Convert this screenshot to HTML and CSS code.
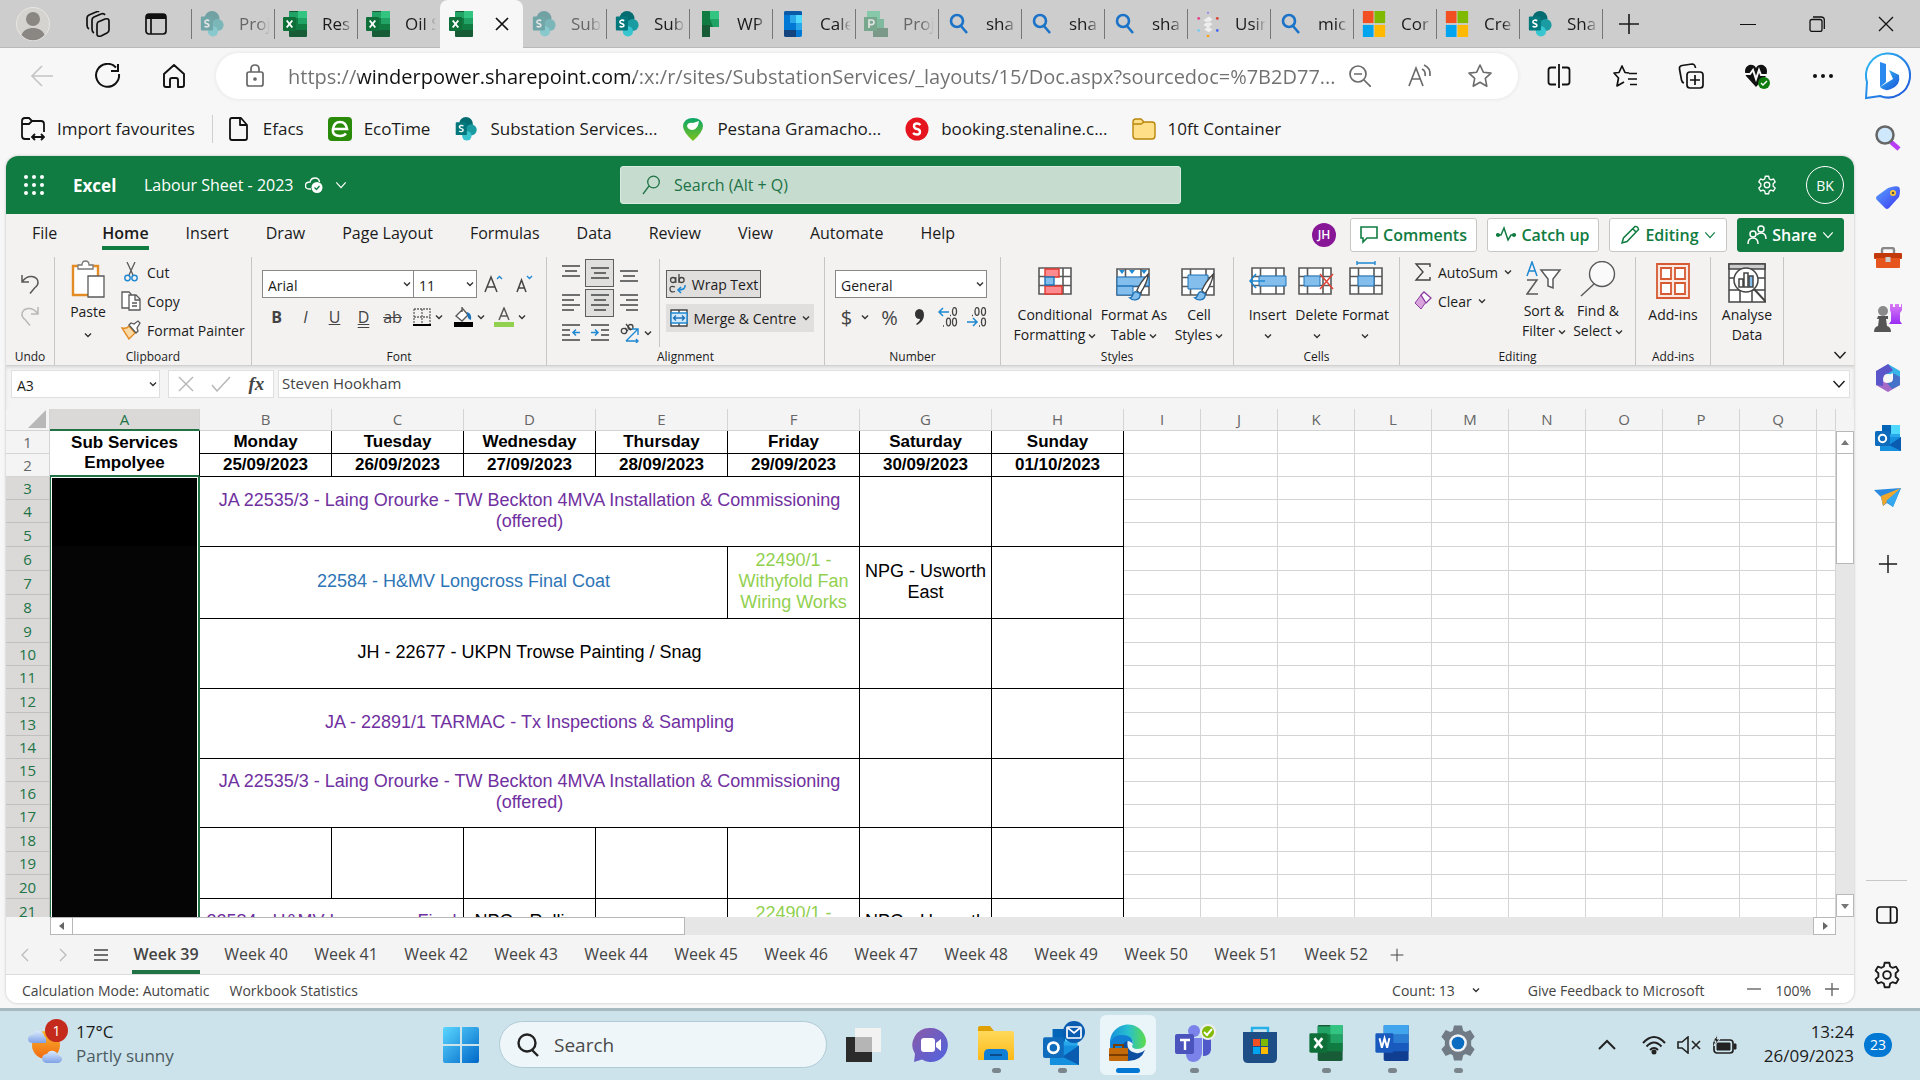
FILE: index.html
```html
<!DOCTYPE html>
<html lang="en-GB">
<head>
<meta charset="utf-8">
<title>Labour Sheet - 2023</title>
<link rel="stylesheet" href="styles.css">
</head>
<body>
<svg class="sprite" aria-hidden="true">
  <defs>
    <linearGradient id="gWin" x1="0" y1="0" x2="1" y2="1"><stop offset="0" stop-color="#5ad6ff"/><stop offset="1" stop-color="#0067c8"/></linearGradient>
    <linearGradient id="gBing" x1="0" y1="0" x2="1" y2="1"><stop offset="0" stop-color="#2fc0f5"/><stop offset="1" stop-color="#1e50d8"/></linearGradient>
    <linearGradient id="gTag" x1="0" y1="0" x2="1" y2="1"><stop offset="0" stop-color="#5aa5ff"/><stop offset="1" stop-color="#3b35f0"/></linearGradient>
    <linearGradient id="gPin" x1="0" y1="0" x2="0" y2="1"><stop offset="0" stop-color="#0aa66a"/><stop offset="1" stop-color="#7cc21c"/></linearGradient>
    <linearGradient id="gSun" x1="0" y1="0" x2="0" y2="1"><stop offset="0" stop-color="#fbb42b"/><stop offset="1" stop-color="#f06a12"/></linearGradient>
    <linearGradient id="gCloud" x1="0" y1="0" x2="0" y2="1"><stop offset="0" stop-color="#dce9fd"/><stop offset="1" stop-color="#7ea2e6"/></linearGradient>
    <linearGradient id="gChat" x1="0" y1="0" x2="1" y2="1"><stop offset="0" stop-color="#8a5aa8"/><stop offset="1" stop-color="#4f63e0"/></linearGradient>
    <linearGradient id="gFolder" x1="0" y1="0" x2="0" y2="1"><stop offset="0" stop-color="#ffd95c"/><stop offset="1" stop-color="#fbb917"/></linearGradient>
    <linearGradient id="gEdge" x1="0" y1="0" x2="1" y2="0"><stop offset="0" stop-color="#1591dc"/><stop offset=".5" stop-color="#27bfd0"/><stop offset="1" stop-color="#5ddc4a"/></linearGradient>
    <linearGradient id="gRook" x1="0" y1="0" x2="0" y2="1"><stop offset="0" stop-color="#d97cf5"/><stop offset="1" stop-color="#9a2cf5"/></linearGradient>
  </defs>
  <symbol id="sp" viewBox="0 0 24 28"><circle cx="12" cy="8" r="8" fill="#036c70"/><circle cx="18" cy="15" r="6.500" fill="#1a9ba1"/><circle cx="13" cy="22" r="5.500" fill="#37c6d0"/><rect y="6" width="13" height="15" rx="1" fill="#03787c"/><path d="M9 10.500C7 9.200 4.300 10 4.300 11.800 4.300 14.200 8.700 13 8.700 15.300 8.700 17.400 5.600 17.500 4 16.300" fill="none" stroke="#fff" stroke-width="1.700"/></symbol>
  <symbol id="xl" viewBox="0 0 24 26"><rect x="6" width="18" height="26" rx="1" fill="#185c37"/><path d="M6 1h9v6H6z" fill="#21a366"/><path d="M15 0h9v7h-9z" fill="#33c481"/><path d="M15 7h9v6h-9z" fill="#21a366"/><path d="M6 7h9v12H6zM15 13h9v6h-9z" fill="#107c41"/><rect y="6" width="13" height="14" rx="1" fill="#0e7038"/><path d="m3.700 9.500 5.600 7M9.300 9.500l-5.600 7" stroke="#fff" stroke-width="1.900"/></symbol>
  <symbol id="mag" viewBox="0 0 24 24"><circle cx="10" cy="9" r="6" fill="none" stroke="#1a73c8" stroke-width="2.600"/><path d="m14 14 6 7" stroke="#1a73c8" stroke-width="2.600"/></symbol>
  <symbol id="ms" viewBox="0 0 24 28"><path d="M0 0h11.500v13H0z" fill="#f25022"/><path d="M12.500 0H24v13H12.500z" fill="#7fba00"/><path d="M0 15h11.500v13H0z" fill="#00a4ef"/><path d="M12.500 15H24v13H12.500z" fill="#ffb900"/></symbol>
  <symbol id="chev" viewBox="0 0 8 8"><path d="m1 2.500 3 3 3-3" fill="none" stroke="currentColor" stroke-width="1.400"/></symbol>
  <symbol id="chevL" viewBox="0 0 14 14"><path d="m1.500 4 5.500 6 5.500-6" fill="none" stroke="currentColor" stroke-width="1.400"/></symbol>
  <symbol id="plus" viewBox="0 0 22 22"><path d="M11 1v20M1 11h20" stroke="currentColor" stroke-width="1.600"/></symbol>
  <symbol id="cog" viewBox="0 0 24 24"><path d="M10 1.500h4l.7 3.200 2 1.100 3.100-1 2 3.500-2.400 2.200v3l2.400 2.200-2 3.500-3.100-1-2 1.100-.7 3.200h-4l-.7-3.200-2-1.100-3.100 1-2-3.500 2.400-2.200v-3L2.200 8.300l2-3.500 3.100 1 2-1.100z" fill="none" stroke="currentColor" stroke-width="1.600" stroke-linejoin="round"/><circle cx="12" cy="12" r="3.300" fill="none" stroke="currentColor" stroke-width="1.600"/></symbol>
  <symbol id="brush" viewBox="0 0 20 28"><path d="M19 1C14 6 10 12 8 17l3 3C15 14 18 8 19 1z" fill="#fff" stroke="#444" stroke-width="1.300"/><path d="M7 18c-4 0-2 6-6 6 3 3 11 3 10-4z" fill="#83beec" stroke="#1e73b8" stroke-width="1.300"/></symbol>
  <symbol id="grid" viewBox="0 0 34 28"><path d="M1 1h32v26H1z" fill="#fff"/><path d="M1 1h32v26H1zM1 9.500h32M1 18.500h32M9.500 1v26M25 1v26" fill="none" stroke="#595959" stroke-width="1.600"/></symbol>
  <symbol id="outlook" viewBox="0 0 26 26"><path d="M7 0h18v18H7z" fill="#28a8ea"/><path d="M7 0h9v9H7z" fill="#0364b8"/><path d="M16 0h9v9h-9z" fill="#50d9ff"/><path d="m5 12 21 0v14H5z" fill="#1490df"/><path d="m26 12-12 8 12 6z" fill="#0a5cb0"/><rect y="6" width="15" height="15" rx="1.500" fill="#0f6cbd"/><circle cx="7.500" cy="13.500" r="3.700" fill="none" stroke="#fff" stroke-width="2"/></symbol>
</svg>

<header class="tabstrip">
  <div class="strip-tools">
    <button class="plain" aria-label="Profile"><svg width="34" height="34" viewBox="0 0 34 34"><circle cx="17" cy="17" r="16.500" fill="#d5d3cf" stroke="#e8e6e2"/><circle cx="17" cy="12" r="7" fill="#8a8783"/><path d="M5.500 28C8 18.500 26 18.500 28.500 28c-6 7-17 7-23 0z" fill="#8a8783"/></svg></button>
    <button class="plain" aria-label="Workspaces"><svg width="26" height="26" viewBox="0 0 26 26" fill="none" stroke="#111" stroke-width="1.700" stroke-linejoin="round"><path d="m13 11 7-3q4-1 4 2v9q0 2-2 3l-6 3q-4 1-4-2v-9q0-2 1-3z"/><path d="M9 22q-2-1-2-4V9q0-2 2-3l7-3q3-1 4 1"/><path d="M4 18q-2-1-2-4V7q0-2 2-3l7-3q2-1 3 0"/></svg></button>
    <button class="plain" aria-label="Tab actions"><svg width="22" height="22" viewBox="0 0 22 22"><rect x="1" y="1" width="20" height="20" rx="3" fill="none" stroke="#111" stroke-width="1.700"/><path d="M1 3q0-2 2-2h16q2 0 2 2v3H1z" fill="#111"/><path d="M6 6v15" stroke="#111" stroke-width="1.700"/></svg></button>
  </div>
  <nav class="tabs">
    <a href="#" class="tab asleep"><svg><use href="#sp"/></svg><span>Proj</span></a>
    <a href="#" class="tab"><svg><use href="#xl"/></svg><span>Res</span></a>
    <a href="#" class="tab"><svg><use href="#xl"/></svg><span>Oil S</span></a>
    <a href="#" class="tab active"><svg><use href="#xl"/></svg><svg class="close" viewBox="0 0 14 14"><path d="m1 1 12 12M13 1 1 13" stroke="#111" stroke-width="1.700"/></svg></a>
    <a href="#" class="tab asleep"><svg><use href="#sp"/></svg><span>Sub</span></a>
    <a href="#" class="tab"><svg><use href="#sp"/></svg><span>Sub</span></a>
    <a href="#" class="tab"><svg viewBox="0 0 24 26"><path d="M4 0h17v16h-9v10H4z" fill="#107c41"/><path d="M12 0h9v8h-9z" fill="#33c481"/><path d="M12 8h9v8h-6z" fill="#21a366"/><path d="M4 14h8v12H4z" fill="#185c37"/></svg><span>WP</span></a>
    <a href="#" class="tab"><svg viewBox="0 0 24 26"><rect x="3" width="18" height="26" rx="2" fill="#0078d4"/><path d="M3 4h18V2q0-2-2-2H5Q3 0 3 2z" fill="#0a5aa8"/><path d="M9 4h6v8H9zM15 12h6v7h-6z" fill="#28a8ea"/><path d="M15 4h6v8h-6z" fill="#50d9ff"/><path d="M3 19h12v7H5q-2 0-2-2z" fill="#14447d"/></svg><span>Cale</span></a>
    <a href="#" class="tab asleep"><svg viewBox="0 0 24 26"><path d="M3 0h13v13H3z" fill="#33c481"/><path d="M13 8h7v9h-7z" fill="#21a366"/><path d="M9 17h15v9H9z" fill="#185c37"/><rect y="6" width="13" height="14" fill="#107c41"/><path d="M5 17V9h2.500q2.500 0 2.500 2.300t-2.500 2.400H5" fill="none" stroke="#fff" stroke-width="1.700"/></svg><span>Proj</span></a>
    <a href="#" class="tab"><svg><use href="#mag"/></svg><span>sha</span></a>
    <a href="#" class="tab"><svg><use href="#mag"/></svg><span>sha</span></a>
    <a href="#" class="tab"><svg><use href="#mag"/></svg><span>sha</span></a>
    <a href="#" class="tab"><svg viewBox="0 0 24 28"><path d="m7 10 6-4 4 3-5 4zM7 15l5 3 5-4-5-3zM8 20l5 3 4-3-5-3z" fill="#eee"/><circle cx="12" cy="2" r="1.200" fill="#8c8cf0"/><circle cx="2" cy="8" r="1.500" fill="#e83e8c"/><circle cx="22" cy="8" r="1.500" fill="#d9442f"/><circle cx="2" cy="21" r="1.500" fill="#7ecbf2"/><circle cx="22" cy="21" r="1.500" fill="#4a6cf0"/><circle cx="12" cy="27" r="1.500" fill="#f5a30a"/></svg><span>Usin</span></a>
    <a href="#" class="tab"><svg><use href="#mag"/></svg><span>mic</span></a>
    <a href="#" class="tab"><svg><use href="#ms"/></svg><span>Cor</span></a>
    <a href="#" class="tab"><svg><use href="#ms"/></svg><span>Cre</span></a>
    <a href="#" class="tab"><svg><use href="#sp"/></svg><span>Sha</span></a>
  </nav>
  <button class="plain new-tab" aria-label="New tab"><svg width="22" height="22"><use href="#plus"/></svg></button>
  <div class="window-buttons">
    <button class="plain" aria-label="Minimise"><svg width="16" height="16"><path d="M0 8.500h16" stroke="#111"/></svg></button>
    <button class="plain" aria-label="Restore"><svg width="16" height="16" fill="none" stroke="#111" stroke-width="1.300"><rect x="1" y="3.500" width="12" height="12" rx="2"/><path d="M4 1h8q3.300 0 3.300 3v9"/></svg></button>
    <button class="plain" aria-label="Close"><svg width="16" height="16"><path d="m1 1 14 14M15 1 1 15" stroke="#111" stroke-width="1.300"/></svg></button>
  </div>
</header>

<div class="toolbar">
  <button class="plain nav-button" aria-label="Back"><svg width="24" height="24" fill="none" stroke="#c4c4c4" stroke-width="1.600"><path d="M23 12H2M12 2 2 12l10 10"/></svg></button>
  <button class="plain nav-button" aria-label="Refresh"><svg width="26" height="26" fill="none" stroke="#111" stroke-width="2"><path d="M24 11a11.500 11.500 0 1 1-3-6.500"/><path d="M23 1v7h-7"/></svg></button>
  <button class="plain nav-button" aria-label="Home"><svg width="24" height="24" fill="none" stroke="#111" stroke-width="1.900" stroke-linejoin="round"><path d="M2 10 12 1l10 9v11q0 2-2 2h-4v-7q0-2-2-2h-4q-2 0-2 2v7H4q-2 0-2-2z"/></svg></button>
  <div class="address">
    <svg width="18" height="24" fill="none" stroke="#666" stroke-width="1.700"><rect x="1" y="8" width="16" height="14" rx="2"/><path d="M5 8V5q0-4 4-4t4 4v3"/><circle cx="9" cy="15" r="1" fill="#666"/></svg>
    <input class="url" aria-label="Address" value="https://winderpower.sharepoint.com/:x:/r/sites/SubstationServices/_layouts/15/Doc.aspx?sourcedoc=%7B2D77...">
    <button class="plain" aria-label="Zoom out"><svg width="22" height="22" fill="none" stroke="#6b6b6b" stroke-width="1.700"><circle cx="9" cy="9" r="8"/><path d="m15 15 7 7M5 9h8"/></svg></button>
    <button class="plain" aria-label="Read aloud"><svg width="24" height="24" fill="none" stroke="#6b6b6b" stroke-width="1.700"><path d="m1 22 7-18 7 18M4 15h9M14 5q4 2 3 7M16 1q7 3 6 11"/></svg></button>
    <button class="plain" aria-label="Favourite"><svg width="24" height="24" viewBox="0 0 24 24" fill="none" stroke="#6b6b6b" stroke-width="1.600" stroke-linejoin="round"><path d="m12 1 3.300 7.200 7.700.9-5.700 5.300 1.500 7.800L12 18.300l-6.800 3.900 1.500-7.800L1 9.100l7.700-.9z"/></svg></button>
  </div>
  <div class="toolbar-right">
    <button class="plain" aria-label="Split screen"><svg width="24" height="24" fill="none" stroke="#111" stroke-width="1.800"><path d="M9 3.500H4q-2.500 0-2.500 2.500v12q0 2.500 2.500 2.500h5M15 3.500h5q2.500 0 2.500 2.500v12q0 2.500-2.500 2.500h-5M12 0v24"/></svg></button>
    <button class="plain" aria-label="Favourites"><svg width="24" height="24" fill="none" stroke="#111" stroke-width="1.700" stroke-linejoin="round"><path d="m16 9-4-.5L9 2 6 8.500 1 9l4.500 5L4 22l7-4M16 9.500h8M15 15h9M17 20.500h7"/></svg></button>
    <button class="plain" aria-label="Collections"><svg width="26" height="26" fill="none" stroke="#111" stroke-width="1.700"><rect x="9" y="9" width="16" height="16" rx="3"/><path d="M17 12v10M12 17h10M6 20q-2-.5-2.500-3L1.500 6Q1 3 4 2.500L14 1q3 0 3.500 4"/></svg></button>
    <button class="plain" aria-label="Performance"><svg width="26" height="26"><path d="M12 24 2 13Q-1 5 5 2q5-1 7 3 2-4 7-3 6 3 3 11z" fill="#111"/><path d="M0 11h6l3-4 3 9 3-9 2 5h7" fill="none" stroke="#f7f7f7" stroke-width="2"/><circle cx="20" cy="20" r="6" fill="#107c10"/><path d="m17 20 2 2 4-4" fill="none" stroke="#fff" stroke-width="1.400"/></svg></button>
    <button class="plain" aria-label="More"><svg width="22" height="22" fill="#111"><circle cx="3" cy="11" r="2"/><circle cx="11" cy="11" r="2"/><circle cx="19" cy="11" r="2"/></svg></button>
    <button class="plain bing" aria-label="Bing"><svg width="46" height="48" viewBox="0 0 46 48"><path d="M1 46 2 30A22 22 0 1 1 15 44Q8 45 1 46z" fill="#fff" stroke="url(#gBing)" stroke-width="2"/><path d="m15 10 6 2v18l-6 5z" fill="#2a8af0"/><path d="m24 18 10 5q2 10-8 14-6 3-11-2l13-8z" fill="url(#gBing)"/></svg></button>
  </div>
</div>

<div class="middle">
<div class="content">
  <nav class="favourites">
    <a href="#"><svg width="24" height="24" fill="none" stroke="#111" stroke-width="1.800"><path d="M9 22H4q-3 0-3-3V4q0-3 3-3h4l3 3h9q3 0 3 3v8M1 7h7l3-3"/><path d="M11 20h12M14 17l-3 3 3 3M20 17l3 3-3 3"/></svg>Import favourites</a>
    <a href="#" class="after-line"><svg width="24" height="24" viewBox="0 0 24 24" fill="none" stroke="#111" stroke-width="1.800" stroke-linejoin="round"><path d="M5 1h9l6 7v13q0 2-2 2H5q-2 0-2-2V3q0-2 2-2zM13 1v7h7"/></svg>Efacs</a>
    <a href="#"><svg width="24" height="24"><rect width="24" height="24" rx="4" fill="#2a8a0a"/><path d="M5 12h14Q18 5 12 5t-7 7 7 7q4 0 6-2.500" fill="none" stroke="#fff" stroke-width="2.600"/></svg>EcoTime</a>
    <a href="#"><svg width="24" height="24"><use href="#sp"/></svg>Substation Services...</a>
    <a href="#"><svg width="24" height="24"><path d="M12 24Q2 15 2 9 3 1 12 1t10 8q0 6-10 15z" fill="url(#gPin)"/><path d="M6 9q1-4 6-3l6-2q-1 8-6 9-5 0-6-4z" fill="#fff"/></svg>Pestana Gramacho...</a>
    <a href="#"><svg width="24" height="24"><circle cx="12" cy="12" r="11.500" fill="#e5141e"/><path d="M15.500 8Q14 6.500 12 6.500 9 6.500 9 9t3 3q3 .5 3 3t-3 2.500q-2.500 0-4-1.500" fill="none" stroke="#fff" stroke-width="2.400"/></svg>booking.stenaline.c...</a>
    <a href="#"><svg width="24" height="24"><path d="M1 5q0-3 3-3h5l3 3h8q3 0 3 3v11q0 3-3 3H4q-3 0-3-3z" fill="#ffdf87" stroke="#b8860b" stroke-width="1.400"/><path d="M1 7h8l3-2" fill="none" stroke="#b8860b" stroke-width="1.400"/></svg>10ft Container</a>
  </nav>

  <main class="excel">
    <div class="appbar">
      <button class="plain waffle" aria-label="Apps"><svg width="20" height="20" fill="#fff"><circle cx="2" cy="2" r="2"/><circle cx="10" cy="2" r="2"/><circle cx="18" cy="2" r="2"/><circle cx="2" cy="10" r="2"/><circle cx="10" cy="10" r="2"/><circle cx="18" cy="10" r="2"/><circle cx="2" cy="18" r="2"/><circle cx="10" cy="18" r="2"/><circle cx="18" cy="18" r="2"/></svg></button>
      <strong>Excel</strong>
      <button class="plain doc-name"><span>Labour Sheet - 2023</span><svg width="18" height="18"><path d="M6 13H4q-3.500 0-3.500-3.500T5 6q1-4 5-4t4.500 4" fill="none" stroke="#fff" stroke-width="1.300"/><circle cx="12" cy="11.500" r="5.500" fill="#fff"/><path d="m9.500 11.500 2 2 3-3.500" fill="none" stroke="#107c41" stroke-width="1.300"/></svg><svg width="12" height="12"><use href="#chevL"/></svg></button>
      <label class="search"><svg width="18" height="20" fill="none" stroke="#217346" stroke-width="1.300"><circle cx="11.500" cy="7" r="5.800"/><path d="m7 11-6 8"/></svg><input type="search" aria-label="Search" placeholder="Search (Alt + Q)"></label>
      <div class="appbar-right">
        <button class="plain" aria-label="Settings"><svg width="20" height="20"><use href="#cog"/></svg></button>
        <button class="account">BK</button>
      </div>
    </div>

    <div class="ribbon-tabs">
      <nav>
        <a href="#" class="file">File</a><a href="#" class="current">Home</a><a href="#">Insert</a><a href="#">Draw</a><a href="#">Page Layout</a><a href="#">Formulas</a><a href="#">Data</a><a href="#">Review</a><a href="#">View</a><a href="#">Automate</a><a href="#">Help</a>
      </nav>
      <div class="actions">
        <span class="presence">JH</span>
        <button class="w-comments"><svg width="18" height="18" fill="none" stroke="#107c41" stroke-width="1.600"><path d="M1 1h16v11H7l-4 4v-4H1z"/></svg>Comments</button>
        <button class="w-catch"><svg width="20" height="18" fill="none" stroke="#107c41" stroke-width="1.500"><path d="M2 9h3l3-7 4 12 3-5h4"/><circle cx="2" cy="9" r="1.300" fill="#107c41"/><circle cx="18" cy="9" r="1.300" fill="#107c41"/></svg>Catch up</button>
        <button class="w-editing"><svg width="20" height="20" fill="none" stroke="#107c41" stroke-width="1.500"><path d="m2 18 1.500-5L15 1.500q3-.5 3.500 3L7 16.500zM13 4l3 3"/></svg>Editing<svg width="12" height="12"><use href="#chevL"/></svg></button>
        <button class="share"><svg width="20" height="20" fill="none" stroke="#fff" stroke-width="1.500"><circle cx="6" cy="9" r="3"/><path d="M1 19q0-6 5-6t5 6"/><circle cx="14" cy="4" r="3"/><path d="M10 10q1-2 4-2 5 0 5 6"/></svg>Share<svg width="12" height="12"><use href="#chevL"/></svg></button>
      </div>
    </div>

    <div class="ribbon">
      <section class="group undo">
        <div class="body">
          <button class="plain" aria-label="Undo"><svg width="18" height="20" fill="none" stroke="#595959" stroke-width="1.500"><path d="M1 1v7h7M1 8Q5 2 11 2.500q6 1 6 6 0 3-3 5l-5 6"/></svg></button>
          <button class="plain" aria-label="Redo"><svg width="18" height="20" fill="none" stroke="#b8b8b8" stroke-width="1.500"><path d="M17 1v7h-7M17 8Q13 2 7 2.500q-6 1-6 6 0 3 3 5l5 6"/></svg></button>
        </div>
        <h3>Undo</h3>
      </section>

      <section class="group clipboard">
        <div class="body">
          <button class="plain paste"><svg width="34" height="38"><path d="M2 6h25v29H2z" fill="#fff" stroke="#e38b24" stroke-width="2.400"/><path d="M7 9V5h4q0-4 3.500-4T18 5h4v4z" fill="#fff" stroke="#7a7a7a" stroke-width="1.300"/><path d="M17 16h16v21H17z" fill="#fff" stroke="#595959" stroke-width="1.300"/></svg><span>Paste</span><svg class="c"><use href="#chev"/></svg></button>
          <div class="stack">
            <button class="plain"><svg width="20" height="20" fill="none"><path d="m6 0 6 13M14 0 8 13" stroke="#595959" stroke-width="1.300"/><circle cx="6.500" cy="16" r="2.700" stroke="#1e88d2" stroke-width="1.400"/><circle cx="13.500" cy="16" r="2.700" stroke="#1e88d2" stroke-width="1.400"/></svg>Cut</button>
            <button class="plain"><svg width="20" height="20" fill="#fff" stroke="#595959" stroke-width="1.300"><path d="M1 1h7l2 2v14H1z"/><path d="M8 4h7l4 4v11H8zM14 4v5h5M11 12h5M11 15h5"/></svg>Copy</button>
            <button class="plain"><svg width="20" height="20"><path d="M1 8q5 1 7-2l6 7-6 6z" fill="#fbd9a5" stroke="#e38b24" stroke-width="1.400"/><path d="m8 5 2-2 3 1 4-3 2 2-3 5 1 3-2 2z" fill="#fff" stroke="#595959" stroke-width="1.300"/></svg>Format Painter</button>
          </div>
        </div>
        <h3>Clipboard</h3>
      </section>

      <section class="group font">
        <div class="body">
          <div class="line top">
            <div class="combo wide"><select aria-label="Font"><option>Arial</option></select><svg class="c"><use href="#chev"/></svg></div>
            <div class="combo size"><select aria-label="Font size"><option>11</option></select><svg class="c"><use href="#chev"/></svg></div>
            <button class="plain tool grow" aria-label="Increase font size"><svg width="20" height="18" fill="none"><path d="m1 17 6-15 6 15M3 12h8" stroke="#444" stroke-width="1.500"/><path d="m13 4 2.500-2.500L18 4" stroke="#1e88d2" stroke-width="1.400"/></svg></button>
            <button class="plain tool" aria-label="Decrease font size"><svg width="20" height="18" fill="none"><path d="m2 17 4.500-12L11 17M3.500 13h6" stroke="#444" stroke-width="1.500"/><path d="m12 1 2.500 2.500L17 1" stroke="#1e88d2" stroke-width="1.400"/></svg></button>
          </div>
          <div class="line letters">
            <button class="plain tool"><b>B</b></button>
            <button class="plain tool"><i>I</i></button>
            <button class="plain tool"><u>U</u></button>
            <button class="plain tool"><u class="double">D</u></button>
            <button class="plain tool"><s>ab</s></button>
            <button class="plain tool split" aria-label="Borders"><svg width="18" height="18" fill="none" stroke="#666" stroke-width="1.300" stroke-dasharray="2 1"><path d="M1 1h16v15M1 1v15M9 1v15M1 9h16"/><path d="M0 17h18" stroke="#000" stroke-width="2" stroke-dasharray="none"/></svg><svg class="c"><use href="#chev"/></svg></button>
            <button class="plain tool split" aria-label="Fill colour"><svg width="20" height="20"><path d="m3 9 7-7 5 6-6 6zM9 5V0" fill="#fff" stroke="#595959" stroke-width="1.400"/><path d="M14 5q5 1 4 8-4-1-4-8z" fill="#1e73b8"/><path d="M1 15h19v5H1z"/></svg><svg class="c"><use href="#chev"/></svg></button>
            <button class="plain tool split" aria-label="Font colour"><svg width="20" height="20"><path d="m5 13 5-12 5 12M7 9h6" fill="none" stroke="#595959" stroke-width="1.500"/><path d="M0 15h20v5H0z" fill="#92d050"/></svg><svg class="c"><use href="#chev"/></svg></button>
          </div>
        </div>
        <h3>Font</h3>
      </section>

      <section class="group alignment">
        <div class="body">
          <div class="align-grid">
            <button class="plain" aria-label="Top align"><svg width="18" height="18" stroke="#444" stroke-width="1.500"><path d="M0 2h18M3 7h12M0 12h18"/></svg></button>
            <button class="plain pressed" aria-label="Middle align"><svg width="18" height="18" stroke="#444" stroke-width="1.500"><path d="M0 4h18M3 9h12M0 14h18"/></svg></button>
            <button class="plain" aria-label="Bottom align"><svg width="18" height="18" stroke="#444" stroke-width="1.500"><path d="M0 7h18M3 12h12M0 17h18"/></svg></button>
            <button class="plain" aria-label="Align left"><svg width="18" height="18" stroke="#444" stroke-width="1.500"><path d="M0 1h18M0 6h12M0 11h18M0 16h12"/></svg></button>
            <button class="plain pressed" aria-label="Centre"><svg width="18" height="18" stroke="#444" stroke-width="1.500"><path d="M0 1h18M3 6h12M0 11h18M3 16h12"/></svg></button>
            <button class="plain" aria-label="Align right"><svg width="18" height="18" stroke="#444" stroke-width="1.500"><path d="M0 1h18M6 6h12M0 11h18M6 16h12"/></svg></button>
            <button class="plain" aria-label="Decrease indent"><svg width="18" height="18" fill="none" stroke="#444" stroke-width="1.500"><path d="M0 1h18M0 6h8M0 11h8M0 16h18"/><path d="M18 8.500h-7M14 5.500l-3 3 3 3" stroke="#1e88d2"/></svg></button>
            <button class="plain" aria-label="Increase indent"><svg width="18" height="18" fill="none" stroke="#444" stroke-width="1.500"><path d="M0 1h18M10 6h8M10 11h8M0 16h18"/><path d="M0 8.500h7M4 5.500l3 3-3 3" stroke="#1e88d2"/></svg></button>
            <button class="plain split" aria-label="Orientation"><svg width="20" height="20" fill="none"><g stroke="#444" stroke-width="1.300"><circle cx="4" cy="8" r="2.700"/><path d="m5 5 3 3M6 1l5 6"/><circle cx="10.500" cy="4" r="2.500"/></g><path d="M6 18 18 6M12 6h6v6M6 18h12M16 16l2 2-2 2" stroke="#1e88d2" stroke-width="1.400"/></svg><svg class="c"><use href="#chev"/></svg></button>
          </div>
          <div class="wrap-merge">
            <button class="plain pressed wrap"><svg width="18" height="20" viewBox="0 0 18 20" fill="none" stroke="#444" stroke-width="1.300"><circle cx="4" cy="6" r="2.500"/><path d="M6.800 3v6M10 0v9"/><circle cx="12.600" cy="6" r="2.500"/><path d="M6 13Q1 11 1 15t5 2.500"/><path d="M16 11q1 5-7 5M12 13l-3 3 3 3" stroke="#1e88d2" stroke-width="1.600"/></svg>Wrap Text</button>
            <button class="plain merge"><svg width="18" height="18" fill="#fff" stroke="#444" stroke-width="1.400"><path d="M1 1h16v16H1zM9 1v16"/><path d="M1 4h16v10H1z" fill="#d4e9f9" stroke="#1e88d2"/><path d="M4 9h10M6 6.500 3.500 9 6 11.500M12 6.500 14.500 9 12 11.500" fill="none" stroke="#1e73b8"/></svg><span>Merge &amp; Centre</span><svg class="c"><use href="#chev"/></svg></button>
          </div>
        </div>
        <h3>Alignment</h3>
      </section>

      <section class="group number">
        <div class="body">
          <div class="combo wide"><select aria-label="Number format"><option>General</option></select><svg class="c"><use href="#chev"/></svg></div>
          <div class="line symbols">
            <button class="plain split">$<svg class="c"><use href="#chev"/></svg></button>
            <button class="plain">%</button>
            <button class="plain" aria-label="Comma style"><svg width="12" height="18"><path d="M6 1q5 0 5 6 0 6-7 10l-1-1q4-3 4-5-5 0-5-5 0-4 4-5z" fill="#333"/></svg></button>
            <button class="plain" aria-label="Increase decimal"><svg width="20" height="20" fill="none" stroke="#444" stroke-width="1.300"><path d="M11 5H1M5 1 1 5l4 4" stroke="#1e88d2" stroke-width="1.500"/><ellipse cx="16.500" cy="4.500" rx="2" ry="3.800"/><ellipse cx="10.500" cy="15" rx="2" ry="3.800"/><ellipse cx="16.500" cy="15" rx="2" ry="3.800"/><path d="M12 8.500h1M5 19h1"/></svg></button>
            <button class="plain" aria-label="Decrease decimal"><svg width="20" height="20" fill="none" stroke="#444" stroke-width="1.300"><path d="M0 15h10M6 11l4 4-4 4" stroke="#1e88d2" stroke-width="1.500"/><ellipse cx="10" cy="4.500" rx="2" ry="3.800"/><ellipse cx="16.500" cy="4.500" rx="2" ry="3.800"/><ellipse cx="16.500" cy="15" rx="2" ry="3.800"/><path d="M5 8.500h1M12 19h1"/></svg></button>
          </div>
        </div>
        <h3>Number</h3>
      </section>

      <section class="group styles">
        <div class="body">
          <button class="plain big"><svg width="34" height="30"><use href="#grid" width="34" height="28"/><path d="M7 2h14v8H7zM7 19h17v8H7z" fill="#ff8a8f" stroke="#e03a2f" stroke-width="1.400"/><path d="M7 10h9v8H7z" fill="#83beec" stroke="#1e73b8" stroke-width="1.400"/></svg><span>Conditional<br>Formatting<svg class="c"><use href="#chev"/></svg></span></button>
          <button class="plain big"><svg width="38" height="36" viewBox="0 0 38 36"><use href="#grid" x="1" y="1" width="34" height="28"/><path d="M2 10h32v9H2zM2 19h16v9H2z" fill="#83beec" stroke="#1e73b8"/><path d="m4 3 3 4 3-4zM14 3l3 4 3-4zM26 3l3 4 3-4z" fill="#1e88d2"/><use href="#brush" x="11" y="6" width="26" height="29"/></svg><span>Format As<br>Table<svg class="c"><use href="#chev"/></svg></span></button>
          <button class="plain big"><svg width="38" height="36" viewBox="0 0 38 36"><use href="#grid" x="1" y="1" width="34" height="28"/><path d="M8 8h20v14H8z" fill="#83beec" stroke="#1e73b8"/><use href="#brush" x="11" y="6" width="26" height="29"/></svg><span>Cell<br>Styles<svg class="c"><use href="#chev"/></svg></span></button>
        </div>
        <h3>Styles</h3>
      </section>

      <section class="group cells">
        <div class="body">
          <button class="plain big"><svg width="38" height="36"><use href="#grid" x="2" width="34" height="28"/><path d="M10 9h27v10H10z" fill="#83beec" stroke="#1e73b8"/><path d="M16 14H1M7 7l-6 7 6 7" fill="none" stroke="#1e88d2" stroke-width="1.600"/></svg><span>Insert<br><svg class="c"><use href="#chev"/></svg></span></button>
          <button class="plain big"><svg width="38" height="36"><use href="#grid" width="34" height="28"/><path d="M6 9h16v10H6z" fill="#83beec" stroke="#1e73b8"/><path d="m22 7 13 15M35 7 22 22" stroke="#e0453a" stroke-width="1.600"/></svg><span>Delete<br><svg class="c"><use href="#chev"/></svg></span></button>
          <button class="plain big raised"><svg width="34" height="36"><use href="#grid" y="6" width="34" height="28"/><path d="M9 15h16v10H9z" fill="#83beec" stroke="#1e73b8"/><path d="M8 2h18M8 0v4M26 0v4" stroke="#1e88d2" stroke-width="1.400"/></svg><span>Format<br><svg class="c"><use href="#chev"/></svg></span></button>
        </div>
        <h3>Cells</h3>
      </section>

      <section class="group editing">
        <div class="body">
          <div class="stack">
            <button class="plain"><svg width="18" height="18" fill="none" stroke="#444" stroke-width="1.400"><path d="M16 4V1H2l7 8-7 8h14v-3"/></svg>AutoSum<svg class="c"><use href="#chev"/></svg></button>
            <button class="plain"><svg width="18" height="20"><path d="m7 4-6 8 6 6 5-7z" fill="#d9a3dc" stroke="#8b3fa0"/><path d="m7 4 3-3 7 6-5 5z" fill="#fff" stroke="#8b3fa0" stroke-width="1.300"/></svg>Clear<svg class="c"><use href="#chev"/></svg></button>
          </div>
          <button class="plain big"><svg width="36" height="36" fill="none"><path d="m1 15 5-14 5 14M3 10h6" stroke="#1e88d2" stroke-width="1.500"/><path d="M1 19h10L1 33h11" stroke="#595959" stroke-width="1.500"/><path d="M15 9h19l-7 9v9l-5-2v-7z" fill="#fff" stroke="#595959" stroke-width="1.500"/></svg><span>Sort &amp;<br>Filter<svg class="c"><use href="#chev"/></svg></span></button>
          <button class="plain big"><svg width="36" height="36" fill="#fafafa" stroke="#595959" stroke-width="1.400"><circle cx="22" cy="13" r="12.500"/><path d="M14 23 1 35"/></svg><span>Find &amp;<br>Select<svg class="c"><use href="#chev"/></svg></span></button>
        </div>
        <h3>Editing</h3>
      </section>

      <section class="group addins">
        <div class="body"><button class="plain big"><svg width="34" height="36" fill="none" stroke="#d65a32" stroke-width="1.800"><path d="M1 1h32v34H1z" fill="#fbe9e2"/><path d="M5 5h10v11H5zM19 5h10v11H19zM5 20h10v11H5zM19 20h10v11H19z" fill="#fff"/></svg><span>Add-ins</span></button></div>
        <h3>Add-ins</h3>
      </section>

      <section class="group analyse">
        <div class="body"><button class="plain big"><svg width="38" height="40" fill="none" stroke="#444" stroke-width="1.500"><path d="M1 1h36v38H1z" fill="#fff"/><path d="M1 1h36v5H1z" fill="#ccc"/><path d="M1 15h36M1 27h36M12 27v12M24 27v12"/><circle cx="18" cy="17" r="12" fill="#fff"/><path d="m26 26 12 13" stroke-width="2"/><path d="M11 16h4v8h-4zM16 10h4v14h-4z"/><path d="M21 13h4v11h-4z" fill="#83beec"/></svg><span>Analyse<br>Data</span></button></div>
      </section>
      <button class="plain collapse" aria-label="Collapse ribbon"><svg width="14" height="14"><use href="#chevL"/></svg></button>
    </div>

    <div class="formula-bar">
      <div class="combo namebox"><input aria-label="Name box" value="A3"><svg class="c"><use href="#chev"/></svg></div>
      <div class="fx">
        <button class="plain" aria-label="Cancel"><svg width="16" height="16"><path d="m1 1 14 14M15 1 1 15" stroke="#b5b5b5" stroke-width="1.400"/></svg></button>
        <button class="plain" aria-label="Enter"><svg width="20" height="16"><path d="m1 9 5 6L19 1" fill="none" stroke="#b5b5b5" stroke-width="1.400"/></svg></button>
        <button class="plain function">fx</button>
      </div>
      <div class="formula"><input aria-label="Formula" value="Steven Hookham"><button class="plain" aria-label="Expand formula bar"><svg width="14" height="14"><use href="#chevL"/></svg></button></div>
    </div>

    <div class="sheet">
      <div class="viewport">
        <table class="cells-table">
          <colgroup><col class="c-head"><col class="c-name"><col class="c-day" span="7"><col class="c-std" span="9"><col></colgroup>
          <thead><tr><th class="corner"><svg width="18" height="20"><path d="M18 0v18H0z" fill="#b8b8b8"/></svg></th><th class="sel">A</th><th>B</th><th>C</th><th>D</th><th>E</th><th>F</th><th>G</th><th>H</th><th>I</th><th>J</th><th>K</th><th>L</th><th>M</th><th>N</th><th>O</th><th>P</th><th>Q</th><th></th></tr></thead>
          <tbody>
            <tr><th>1</th><td class="k b above" rowspan="2">Sub Services Empolyee</td><td class="k b">Monday</td><td class="k b">Tuesday</td><td class="k b">Wednesday</td><td class="k b">Thursday</td><td class="k b">Friday</td><td class="k b">Saturday</td><td class="k b">Sunday</td><td><td><td><td><td><td><td><td><td><td></tr>
            <tr><th>2</th><td class="k b">25/09/2023</td><td class="k b">26/09/2023</td><td class="k b">27/09/2023</td><td class="k b">28/09/2023</td><td class="k b">29/09/2023</td><td class="k b">30/09/2023</td><td class="k b">01/10/2023</td><td><td><td><td><td><td><td><td><td><td></tr>
            <tr class="on"><th>3</th><td class="redacted" rowspan="19"></td><td class="k purple" colspan="5" rowspan="3">JA 22535/3 - Laing Orourke - TW Beckton 4MVA Installation &amp; Commissioning (offered)</td><td class="k" rowspan="3"></td><td class="k" rowspan="3"></td><td><td><td><td><td><td><td><td><td><td></tr>
            <tr class="on"><th>4</th><td><td><td><td><td><td><td><td><td><td></tr>
            <tr class="on tall"><th>5</th><td><td><td><td><td><td><td><td><td><td></tr>
            <tr class="on tall"><th>6</th><td class="k blue" colspan="4" rowspan="3">22584 - H&amp;MV Longcross Final Coat</td><td class="k green" rowspan="3">22490/1 - Withyfold Fan Wiring Works</td><td class="k" rowspan="3">NPG - Usworth East</td><td class="k" rowspan="3"></td><td><td><td><td><td><td><td><td><td><td></tr>
            <tr class="on tall"><th>7</th><td><td><td><td><td><td><td><td><td><td></tr>
            <tr class="on tall"><th>8</th><td><td><td><td><td><td><td><td><td><td></tr>
            <tr class="on tall"><th>9</th><td class="k" colspan="5" rowspan="3">JH - 22677 - UKPN Trowse Painting / Snag</td><td class="k" rowspan="3"></td><td class="k" rowspan="3"></td><td><td><td><td><td><td><td><td><td><td></tr>
            <tr class="on"><th>10</th><td><td><td><td><td><td><td><td><td><td></tr>
            <tr class="on"><th>11</th><td><td><td><td><td><td><td><td><td><td></tr>
            <tr class="on tall"><th>12</th><td class="k purple" colspan="5" rowspan="3">JA - 22891/1 TARMAC - Tx Inspections &amp; Sampling</td><td class="k" rowspan="3"></td><td class="k" rowspan="3"></td><td><td><td><td><td><td><td><td><td><td></tr>
            <tr class="on"><th>13</th><td><td><td><td><td><td><td><td><td><td></tr>
            <tr class="on"><th>14</th><td><td><td><td><td><td><td><td><td><td></tr>
            <tr class="on"><th>15</th><td class="k purple" colspan="5" rowspan="3">JA 22535/3 - Laing Orourke - TW Beckton 4MVA Installation &amp; Commissioning (offered)</td><td class="k" rowspan="3"></td><td class="k" rowspan="3"></td><td><td><td><td><td><td><td><td><td><td></tr>
            <tr class="on"><th>16</th><td><td><td><td><td><td><td><td><td><td></tr>
            <tr class="on"><th>17</th><td><td><td><td><td><td><td><td><td><td></tr>
            <tr class="on tall"><th>18</th><td class="k" rowspan="3"></td><td class="k" rowspan="3"></td><td class="k" rowspan="3"></td><td class="k" rowspan="3"></td><td class="k" rowspan="3"></td><td class="k" rowspan="3"></td><td class="k" rowspan="3"></td><td><td><td><td><td><td><td><td><td><td></tr>
            <tr class="on"><th>19</th><td><td><td><td><td><td><td><td><td><td></tr>
            <tr class="on tall"><th>20</th><td><td><td><td><td><td><td><td><td><td></tr>
            <tr class="on last"><th>21</th><td class="k purple" colspan="2">22584 - H&amp;MV Longcross Final</td><td class="k">NPG - Rolling</td><td class="k"></td><td class="k green">22490/1 -</td><td class="k">NPG - Usworth</td><td class="k"></td><td><td><td><td><td><td><td><td><td><td></tr>
          </tbody>
        </table>
      </div>
      <div class="vscroll"><button class="plain" aria-label="Scroll up"><svg width="8" height="8"><path d="m4 1 4 5H0z" fill="#777"/></svg></button><div class="thumb"></div><div class="track"></div><button class="plain" aria-label="Scroll down"><svg width="8" height="8"><path d="m4 7 4-5H0z" fill="#777"/></svg></button></div>
    </div>
    <div class="hscroll"><button class="plain" aria-label="Scroll left"><svg width="8" height="8"><path d="m1 4 5-4v8z" fill="#666"/></svg></button><div class="thumb"></div><div class="track"></div><button class="plain" aria-label="Scroll right"><svg width="8" height="8"><path d="m7 4-5-4v8z" fill="#666"/></svg></button></div>

    <nav class="sheet-tabs">
      <button class="plain nav" aria-label="Previous"><svg width="10" height="14"><path d="M8 1 2 7l6 6" fill="none" stroke="#bbb" stroke-width="1.300"/></svg></button>
      <button class="plain nav" aria-label="Next"><svg width="10" height="14"><path d="m2 1 6 6-6 6" fill="none" stroke="#bbb" stroke-width="1.300"/></svg></button>
      <button class="plain nav" aria-label="All sheets"><svg width="14" height="14" stroke="#444" stroke-width="1.500"><path d="M0 2h14M0 7h14M0 12h14"/></svg></button>
      <div class="weeks"><a href="#" class="current">Week 39</a><a href="#">Week 40</a><a href="#">Week 41</a><a href="#">Week 42</a><a href="#">Week 43</a><a href="#">Week 44</a><a href="#">Week 45</a><a href="#">Week 46</a><a href="#">Week 47</a><a href="#">Week 48</a><a href="#">Week 49</a><a href="#">Week 50</a><a href="#">Week 51</a><a href="#">Week 52</a></div>
      <button class="plain" aria-label="New sheet"><svg width="14" height="14" viewBox="0 0 22 22"><use href="#plus"/></svg></button>
    </nav>

    <footer class="status">
      <span>Calculation Mode: Automatic</span><span>Workbook Statistics</span>
      <button class="plain count">Count: 13<svg class="c"><use href="#chev"/></svg></button>
      <a href="#">Give Feedback to Microsoft</a>
      <div class="zoom"><button class="plain" aria-label="Zoom out"><svg width="14" height="14"><path d="M0 6h14" stroke="#666" stroke-width="1.400"/></svg></button><span>100%</span><button class="plain" aria-label="Zoom in"><svg width="14" height="14"><path d="M0 6h14M7 0v13" stroke="#666" stroke-width="1.400"/></svg></button></div>
    </footer>
  </main>
</div>

<aside class="sidebar">
  <button class="plain" aria-label="Search"><svg width="26" height="26"><path d="m16 17 8 7" stroke="#b83df5" stroke-width="4.500"/><circle cx="10" cy="10" r="8.500" fill="#cfe8fb" stroke="#666" stroke-width="2.500"/></svg></button>
  <button class="plain" aria-label="Shopping"><svg width="26" height="26"><path d="M13 3q8-3 11-1 2 3 0 10L14 23q-2 2-4 0l-8-8q-2-2 0-4z" fill="url(#gTag)"/><circle cx="18" cy="8" r="3" fill="#ffc933"/><circle cx="18" cy="8" r="1.300" fill="#555"/></svg></button>
  <button class="plain" aria-label="Tools"><svg width="28" height="22"><path d="M8 6V3q0-2 2-2h8q2 0 2 2v3" fill="none" stroke="#888" stroke-width="2.400"/><rect y="6" width="28" height="6" rx="1" fill="#c23a0c"/><path d="M2 11h24v9q0 1-1 1H3q-1 0-1-1z" fill="#e5551d"/><rect x="11.500" y="10" width="5" height="5" fill="#ccc"/></svg></button>
  <button class="plain" aria-label="Games"><svg width="28" height="28"><path d="M16 0h3v3h2V0h4v3h2V0h1v6l-2 3v8l2 3H15l2-3V9l-1-3z" fill="url(#gRook)"/><circle cx="9" cy="7" r="5" fill="#8a8a8a"/><path d="M4 12h10v3h-2l1 7q4 1 4 6H0q0-5 4-6l1-7H3z" fill="#555"/></svg></button>
  <button class="plain" aria-label="Microsoft 365"><svg width="26" height="28"><path d="m13 0 12 7v10l-7-4V9l-8 4z" fill="#36b5e8"/><path d="M13 0 1 7v14l7 3v-6q-1-8 6-9l4-3z" fill="#5a55c8"/><path d="m1 21 12 7 12-7v-8l-7-2v5q0 3-5 3t-5-3v6z" fill="#a56ac8"/><path d="m25 13-7-4v6q0 4-6 4l5 6 8-4z" fill="#4472c9"/><circle cx="13" cy="14" r="4" fill="#f7f7f7"/></svg></button>
  <button class="plain" aria-label="Outlook"><svg width="26" height="26"><use href="#outlook"/></svg></button>
  <button class="plain" aria-label="Drop"><svg width="28" height="22"><path d="M0 3 27 1 19 20l-6-4-4 3-2-9z" fill="#2a8ae0"/><path d="m7 9 20-8L9 19z" fill="#f0a72a"/><path d="M27 1 12 14l7 6z" fill="#36a8f0"/></svg></button>
  <button class="plain" aria-label="Customise"><svg width="20" height="20"><use href="#plus"/></svg></button>
  <div class="sidebar-foot">
    <button class="plain" aria-label="Sidebar"><svg width="22" height="18" fill="none" stroke="#111" stroke-width="1.700"><rect x="1" y="1" width="20" height="16" rx="3"/><path d="M14.500 1v16"/></svg></button>
    <button class="plain" aria-label="Settings"><svg width="28" height="28"><use href="#cog"/></svg></button>
  </div>
</aside>
</div>

<footer class="taskbar">
  <button class="plain weather"><span class="weather-icon"><svg width="34" height="40"><circle cx="18" cy="20" r="14" fill="url(#gSun)"/><path d="M5 18q-5 0-5-4t5-4q1-5 6-4 5 1 5 5 3 1 2 7z" fill="url(#gCloud)"/><path d="M18 38q-4-1-4-5 1-4 5-4 2-4 7-3 3 1 4 4 4 1 4 4t-4 4z" fill="url(#gCloud)"/></svg><span class="badge">1</span></span><span class="weather-text"><span>17°C</span><small>Partly sunny</small></span></button>
  <div class="pinned">
    <button class="plain app" aria-label="Start"><svg width="36" height="36" fill="url(#gWin)"><path d="M2 0h15v17H0V2q0-2 2-2zM19 0h15q2 0 2 2v15H19zM0 19h17v17H2q-2 0-2-2zM19 19h17v15q0 2-2 2H19z"/></svg></button>
    <label class="task-search"><svg width="24" height="24" fill="none" stroke="#222" stroke-width="2.400"><circle cx="11" cy="10" r="8.500"/><path d="m16 17 6 6"/></svg><input type="search" aria-label="Search Windows" placeholder="Search"></label>
    <button class="plain app" aria-label="Task view"><svg width="36" height="36"><path d="M0 10h26v25H0z" fill="#2b2b2b"/><path d="M9 1h26v24H9z" fill="#f2f2f2"/><path d="M9 10h17v15H9z" fill="#b5b5b5"/></svg></button>
    <button class="plain app" aria-label="Chat"><svg width="36" height="36"><path d="M18 1a17 17 0 1 1-8 31.500L2 35l1-8A17 17 0 0 1 18 1z" fill="url(#gChat)"/><rect x="9" y="11" width="14" height="14" rx="3" fill="#fff"/><path d="m24 16 5-4v12l-5-4z" fill="#fff"/></svg></button>
    <button class="plain app run" aria-label="File Explorer"><svg width="36" height="36"><path d="M0 3q0-2 2-2h10l4 5H0z" fill="#e0a100"/><path d="M0 6h34q2 0 2 2v26q0 1-1 1H1q-1 0-1-1z" fill="url(#gFolder)"/><path d="M6 35v-6q0-5 5-5h14q5 0 5 5v6z" fill="#0f7fd6"/><path d="M12 30h12" stroke="#0a4c8a" stroke-width="2"/></svg></button>
    <button class="plain app run" aria-label="Outlook"><svg width="46" height="46" viewBox="0 0 46 46"><use href="#outlook" x="4" y="9" width="36" height="36"/><circle cx="35" cy="12" r="11" fill="#0a5cb0"/><rect x="28" y="7" width="14" height="11" rx="1" fill="none" stroke="#fff" stroke-width="1.700"/><path d="m29 8 6 5 6-5" fill="none" stroke="#fff" stroke-width="1.700"/></svg></button>
    <button class="plain app run focused" aria-label="Edge"><svg width="38" height="40" viewBox="0 0 38 40"><path d="M19 38A18 18 0 0 1 1 20q1-6 8-8l10 4q-3 12 8 14 5 1 9-3-4 11-17 11z" fill="#0c4fa0"/><path d="M1 21A18 18 0 0 1 37 18q0 8-9 8-7-1-4-5 0-7-7-7-10 0-13 13-3-2-3-6z" fill="url(#gEdge)"/><path d="M1 21q2-9 12-9 11 0 11 9-4-5-8-2-4 4-2 11l4 7Q1 36 1 21z" fill="#1180d4"/><rect y="25" width="19" height="13" rx="1" fill="#c46a0a"/><path d="M5 25v-3h9v3M0 32h19" fill="none" stroke="#7a3d00" stroke-width="2"/></svg></button>
    <button class="plain app run" aria-label="Teams"><svg width="44" height="44" viewBox="0 0 44 44"><circle cx="22" cy="10" r="6" fill="#7b83eb"/><path d="M14 17h16v16q-2 8-9 8-7-1-7-8z" fill="#7b83eb"/><path d="M31 17h8v12q-1 6-8 6z" fill="#5059c9"/><rect x="3" y="13" width="19" height="20" rx="2" fill="#4b53bc"/><path d="M8 19h10M13 19v10" stroke="#fff" stroke-width="2.400"/><circle cx="36" cy="11" r="7" fill="#7fba00" stroke="#eee" stroke-width="2"/><path d="m32 11 3 3 5-6" fill="none" stroke="#fff" stroke-width="2"/></svg></button>
    <button class="plain app" aria-label="Store"><svg width="36" height="38"><path d="M10 8V2h16v6" fill="none" stroke="#28b0ea" stroke-width="2.400"/><path d="M1 6h34v26q0 5-5 5H6q-5 0-5-5z" fill="#1d4f86"/><path d="M11 13h7v7h-7z" fill="#f25022"/><path d="M19 13h7v7h-7z" fill="#7fba00"/><path d="M11 21h7v7h-7z" fill="#00a4ef"/><path d="M19 21h7v7h-7z" fill="#ffb900"/></svg></button>
    <button class="plain app run" aria-label="Excel"><svg width="36" height="36"><use href="#xl"/></svg></button>
    <button class="plain app run" aria-label="Word"><svg width="36" height="36" viewBox="0 0 24 26"><rect x="6" width="18" height="26" rx="1" fill="#103f91"/><path d="M6 0h18v7H6z" fill="#41a5ee"/><path d="M6 7h18v6H6z" fill="#2b7cd3"/><path d="M6 13h18v6H6z" fill="#185abd"/><rect y="6" width="13" height="14" rx="1" fill="#185abd"/><path d="m3 9.500 1.700 7 1.900-7 1.900 7 1.600-7" fill="none" stroke="#fff" stroke-width="1.400"/></svg></button>
    <button class="plain app run" aria-label="Settings"><svg width="38" height="38" viewBox="0 0 24 24"><path d="M9.500 1h5l.8 3.200 1.500.8 3-1.200L22.500 8l-2.200 2.500v3l2.200 2.500-2.700 4.200-3-1.200-1.500.8-.8 3.200h-5l-.8-3.200-1.500-.8-3 1.200L1.500 16l2.200-2.500v-3L1.500 8l2.700-4.200 3 1.200 1.500-.8z" fill="#707b85"/><circle cx="12" cy="12" r="5.600" fill="#f0f4f6"/><circle cx="12" cy="12" r="4" fill="#0a6cc0"/></svg></button>
  </div>
  <div class="tray">
    <button class="plain" aria-label="Hidden icons"><svg width="18" height="12"><path d="m1 10 8-8 8 8" fill="none" stroke="#222" stroke-width="2"/></svg></button>
    <button class="plain network" aria-label="Network, sound and battery"><svg width="24" height="20" fill="none" stroke="#222" stroke-width="2"><path d="M1 8q11-12 22 0M4.500 11.500q7.500-8 15 0M8 15q4-4 8 0"/><circle cx="12" cy="17" r="1.500" fill="#222"/></svg><svg width="24" height="18" fill="none" stroke="#222" stroke-width="1.600"><path d="M1 6h4l6-5v16l-6-5H1zM15 5l8 8M23 5l-8 8"/></svg><svg width="26" height="22"><rect x="2" y="6" width="19" height="13" rx="3" fill="none" stroke="#222" stroke-width="1.700"/><path d="M5 9h13v7H5zM22 10h2v5h-2z" fill="#222" stroke="#222"/><path d="M6 0 1 7h3l-2 5 6-7H5z" fill="#222" stroke="#d0e4eb"/></svg></button>
    <button class="plain clock"><span>13:24</span><span>26/09/2023</span></button>
    <button class="alerts">23</button>
  </div>
</footer>
</body>
</html>
```

FILE: styles.css
```css
* { box-sizing: border-box; }
html, body { margin: 0; }
body {
  display: flex;
  flex-direction: column;
  height: 100vh;
  overflow: hidden;
  background: #f7f7f7;
  color: #1b1b1b;
  font-family: "Open Sans", "Noto Sans", sans-serif;
  font-size: 16px;
}
a { color: inherit; text-decoration: none; }
button, input, select { font: inherit; color: inherit; }
svg { flex: none; display: block; }
.sprite { position: absolute; width: 0; height: 0; }
.plain { display: flex; align-items: center; justify-content: center; padding: 0; border: 0; background: none; }
.c { width: 8px; height: 8px; color: #333; }

/* tab strip */
.tabstrip { display: flex; align-items: stretch; flex: none; height: 48px; background: #cdcdcd; border-bottom: 1px solid #b8b8b8; }
.strip-tools { display: flex; align-items: center; justify-content: space-between; width: 191px; padding: 0 24px 0 16px; }
.tabs { display: flex; }
.tab { display: flex; align-items: center; gap: 15px; width: 83px; padding-left: 9px; white-space: nowrap; font-size: 17px; background: linear-gradient(#777, #777) left center / 1px 30px no-repeat; }
.tab svg { width: 24px; height: 26px; }
.tab span { width: 31px; overflow: hidden; -webkit-mask-image: linear-gradient(90deg, #000 60%, transparent); mask-image: linear-gradient(90deg, #000 60%, transparent); }
.tab.asleep svg { opacity: .45; }
.tab.asleep span { color: #666; }
.tab.active { height: 48px; background: #f7f7f7; border-radius: 8px 8px 0 0; gap: 22px; }
.tab.active .close { width: 14px; height: 14px; }
.tab.active + .tab { background: none; }
.new-tab { width: 54px; background: linear-gradient(#777, #777) left center / 1px 30px no-repeat; }
.window-buttons { display: flex; margin-left: auto; }
.window-buttons .plain { width: 69px; }

/* toolbar */
.toolbar { display: flex; align-items: center; flex: none; height: 56px; padding-left: 9px; }
.nav-button { width: 66px; }
.address { display: flex; align-items: center; flex: 1; height: 46px; margin-left: 9px; padding: 0 26px 0 30px; background: #fff; border-radius: 23px; box-shadow: 0 0 4px #e2e2e2; }
.address .plain { width: 24px; }
.address .plain + .plain { margin-left: 36px; }
.url { flex: 1; min-width: 0; margin-left: 24px; padding: 0; border: 0; outline: 0; font-size: 20px; color: #6b6b6b; background: linear-gradient(90deg, #707070 71px, #111 71px 346px, #707070 346px); -webkit-background-clip: text; background-clip: text; -webkit-text-fill-color: transparent; }
.toolbar-right { display: flex; margin-left: 8px; }
.toolbar-right .plain { width: 66px; height: 48px; }
.toolbar-right .bing { width: 64px; }

.middle { display: flex; flex: 1; min-height: 0; }
.content { display: flex; flex-direction: column; flex: 1; min-width: 0; padding: 0 0 5px 6px; }
.favourites { display: flex; align-items: center; flex: none; gap: 24px; height: 52px; padding: 0 0 3px 15px; white-space: nowrap; font-size: 17px; }
.favourites a { display: flex; align-items: center; gap: 12px; }
.favourites .after-line { margin-left: -7px; padding-left: 14px; border-left: 1px solid #cfcfcf; height: 28px; }

/* excel frame */
.excel { display: flex; flex-direction: column; flex: 1; min-height: 0; overflow: hidden; background: #f4f4f4; border-radius: 12px; box-shadow: 0 0 3px #bbb; }
.appbar { display: flex; align-items: center; flex: none; height: 58px; padding: 0 10px 0 18px; background: #107c41; color: #fff; }
.appbar strong { width: 71px; margin-left: 29px; font-size: 17px; }
.doc-name { gap: 12px; width: 476px; justify-content: flex-start; color: #fff; }
.search { display: flex; align-items: center; gap: 14px; width: 561px; height: 38px; padding-left: 21px; background: #c5dccf; border: 1px solid #d9ebe1; border-radius: 3px; }
.search input { flex: 1; min-width: 0; padding: 0; border: 0; outline: 0; background: none; color: #217346; }
.search input::placeholder { color: #217346; opacity: 1; }
.appbar-right { display: flex; align-items: center; gap: 29px; margin-left: auto; }
.account { width: 38px; height: 38px; padding: 0; border: 1px solid #fff; border-radius: 50%; background: none; font-size: 14px; }

.ribbon-tabs { display: flex; justify-content: space-between; flex: none; height: 41px; padding: 0 10px 0 26px; background: #f3f2f1; }
.ribbon-tabs nav { display: flex; gap: 37px; }
.ribbon-tabs nav a { height: 36px; padding-top: 8px; line-height: 22px; white-space: nowrap; }
.ribbon-tabs .file { margin-right: 8px; }
.ribbon-tabs .current { font-weight: 600; border-bottom: 4px solid #107c41; }
.actions { display: flex; align-items: center; gap: 10px; }
.actions button { display: flex; align-items: center; justify-content: center; gap: 5px; height: 34px; padding: 0; background: #fff; border: 1px solid #c8c6c4; border-radius: 3px; color: #107c41; font-weight: 600; white-space: nowrap; }
.actions .presence { width: 24px; height: 24px; margin-right: 4px; border-radius: 50%; background: #881798; color: #fff; font-size: 12px; font-weight: 600; line-height: 24px; text-align: center; }
.actions .w-comments { width: 127px; }
.actions .w-catch { width: 112px; }
.actions .w-editing { width: 118px; }
.actions .share { width: 107px; background: #107c41; border-color: #107c41; color: #fff; }

/* ribbon */
.ribbon { display: grid; grid-template-columns: 49px 197px 295px 278px 176px 233px 166px 236px 75px 73px 1fr; flex: none; height: 111px; padding: 2px 0 0; background: #f3f2f1; border-bottom: 1px solid #d2d0ce; font-size: 14px; }
.group { display: flex; flex-direction: column; border-right: 1px solid #c8c6c4; white-space: nowrap; }
.group h3 { margin: auto 0 0; font-size: 12px; font-weight: 400; line-height: 16px; text-align: center; }
.body { display: flex; min-height: 0; }
.undo .body { flex-direction: column; align-items: center; gap: 12px; padding-top: 17px; }
.paste { flex-direction: column; gap: 4px; width: 66px; padding-top: 3px; }
.paste .c { margin-top: 6px; }
.clipboard .body { height: 86px; align-items: flex-start; }
.stack { display: flex; flex-direction: column; gap: 9px; padding-top: 5px; }
.stack .plain { justify-content: flex-start; gap: 6px; height: 20px; }
.line { display: flex; align-items: center; }
.font .body { flex-direction: column; padding: 13px 0 0 10px; gap: 5px; }
.combo { display: grid; align-items: center; background: #fff; border: 1px solid #8a8886; }
.combo > * { grid-area: 1 / 1; }
.combo select, .combo input { width: 100%; height: 26px; padding: 2px 0 0 5px; border: 0; outline: 0; background: none; appearance: none; }
.combo .c { justify-self: end; margin-right: 2px; pointer-events: none; }
.combo.wide { width: 152px; }
.combo.size { width: 64px; margin-left: -1px; }
.tool { width: 29px; height: 28px; font-size: 16px; color: #444; }
.tool.grow { width: 33px; }
.tool.split { width: 41px; gap: 4px; }
.tool .double { text-decoration-style: double; }
.alignment .body { gap: 16px; padding: 2px 0 0 9px; }
.align-grid { display: grid; grid-template-columns: 29px 29px 29px; grid-auto-rows: 28px; row-gap: 2px; border-right: 1px solid #c8c6c4; width: 104px; }
.align-grid .split { width: 44px; gap: 4px; }
.pressed { background: #e1dfdd; outline: 1px solid #605e5c; outline-offset: -1px; }
.wrap-merge { display: flex; flex-direction: column; gap: 6px; margin-left: -10px; padding-top: 11px; }
.wrap { width: 95px; height: 28px; gap: 5px; }
.merge { width: 148px; height: 28px; gap: 6px; background: #e1dfdd; }
.number .body { flex-direction: column; gap: 5px; padding: 13px 0 0 10px; }
.symbols { height: 28px; font-size: 20px; color: #444; }
.symbols .plain { width: 29px; }
.symbols .split { width: 40px; gap: 9px; }
.big { flex-direction: column; justify-content: flex-start; padding-top: 10px; }
.big > span { display: block; margin-top: 2px; line-height: 20px; text-align: center; }
.big > svg { height: 36px; }
.big .c { display: inline-block; margin-left: 3px; }
.styles .body { padding-left: 11px; }
.styles .big { width: 58px; }
.styles .big:first-child { width: 86px; }
.styles .big:nth-child(2) { width: 72px; }
.cells .body { padding-left: 9px; }
.cells .big { width: 49px; }
.cells .raised { padding-top: 4px; }
.cells .raised > span { margin-top: 8px; }
.cells .big .c { margin-left: 0; }
.editing .body { padding-left: 14px; }
.editing .stack { width: 103px; }
.editing .big { width: 54px; padding-top: 4px; }
.editing .big > span { margin-top: 4px; }
.addins .big, .analyse .big { width: 100%; padding-top: 6px; }
.addins .big > span { margin-top: 6px; }
.analyse .big > svg { height: 40px; }
.analyse .big > span { margin-top: 2px; }
.collapse { align-self: end; justify-self: end; width: 28px; height: 20px; }

.formula-bar { display: flex; gap: 8px; flex: none; padding: 4px 4px 0 5px; height: 43px; box-shadow: inset 0 2px 3px #ddd; font-size: 14px; }
.combo.namebox, .fx, .formula { height: 28px; border: 1px solid #e1dfdd; background: #fff; }
.combo.namebox { width: 149px; }
.fx { display: flex; align-items: center; justify-content: space-around; width: 106px; }
.function { font: italic 700 19px "Liberation Serif", serif; color: #444; }
.formula { display: flex; flex: 1; margin-left: -4px; }
.formula input { flex: 1; min-width: 0; padding: 0 3px 3px; border: 0; outline: 0; background: none; font-size: 15px; color: #444; }
.formula .plain { width: 20px; }

/* sheet */
.sheet { display: flex; flex: 1; min-height: 0; }
.viewport { flex: 1; min-width: 0; overflow: hidden; }
.cells-table { width: 100%; table-layout: fixed; border-spacing: 0; background: #fff; font: 18px/21px "Liberation Sans", Arial, sans-serif; }
.c-head { width: 44px; }
.c-name { width: 150px; }
.c-day { width: 132px; }
.c-std { width: 77px; }
.cells-table tr { height: 23px; }
.cells-table tr.tall { height: 24px; }
.cells-table td, .cells-table th { padding: 0; border: 0 solid #d4d4d4; border-width: 0 1px 1px 0; }
.cells-table th { background: #f4f4f4; color: #666; font: 400 15px/20px "Open Sans", sans-serif; }
.cells-table thead tr { height: 22px; }
.cells-table thead th { padding-bottom: 2px; line-height: 18px; }
.corner svg { margin-left: auto; margin-right: 3px; height: 18px; }
.cells-table thead .sel { padding-bottom: 1px; background: #dad9d7; color: #217346; border-bottom: 2px solid #217346; }
.on th { background: #dad9d7; color: #217346; border-color: #c0c0c0; }
.cells-table td.k { padding-bottom: 2px; border-color: #000; color: #000; text-align: center; }
.cells-table td.purple { color: #7030a0; }
.cells-table td.blue { color: #2e75b6; }
.cells-table td.green { color: #92d050; }
.cells-table td.b { padding-bottom: 0; font-size: 17px; font-weight: 700; line-height: 20px; }
.cells-table td.above { border-bottom: 2px solid #217346; }
.cells-table td.redacted { border: solid #217346; border-width: 0 2px 0 1px; background: linear-gradient(#000 69px, #050505 69px); box-shadow: inset 0 0 0 1px #fff; }
.cells-table .last > * { vertical-align: top; }
.cells-table .last th { padding-top: 2px; }
.cells-table .last td.k { padding-top: 12px; }
.cells-table .last td.green { padding-top: 4px; }

.vscroll { display: flex; flex-direction: column; width: 18px; padding-top: 22px; }
.vscroll .plain, .hscroll .plain { border: 1px solid #b8b8b8; background: #fff; }
.vscroll .plain { height: 23px; }
.thumb { border: 1px solid #b8b8b8; background: #fff; }
.track { flex: 1; background: #e6e6e6; }
.vscroll .thumb { height: 111px; margin-top: -1px; }
.hscroll { display: flex; flex: none; height: 18px; padding: 0 18px 0 44px; }
.hscroll .plain { width: 23px; }
.hscroll .thumb { width: 613px; margin-left: -1px; }

.sheet-tabs { display: flex; flex: none; height: 40px; border-bottom: 1px solid #dcdcdc; color: #444; }
.sheet-tabs .nav { width: 38px; }
.weeks { display: flex; gap: 22px; margin: 0 20px 0 12px; }
.weeks a { width: 68px; padding-top: 7px; line-height: 24px; text-align: center; white-space: nowrap; }
.weeks .current { font-weight: 600; border-bottom: 4px solid #217346; }

.status { display: flex; align-items: center; gap: 20px; flex: none; height: 28px; padding: 2px 15px 0 16px; background: #fff; color: #444; font-size: 14px; white-space: nowrap; }
.count { gap: 17px; margin-left: auto; margin-right: 28px; }
.zoom { display: flex; align-items: center; gap: 14px; margin-left: 23px; }

.sidebar { display: flex; flex-direction: column; flex: none; width: 66px; padding: 4px 0 0 1px; }
.sidebar > .plain { flex: none; height: 60px; }
.sidebar > .plain:nth-child(8) { height: 72px; }
.sidebar-foot { display: flex; flex-direction: column; margin: auto 13px 3px 11px; padding-top: 4px; border-top: 1px solid #c8c8c8; }
.sidebar-foot .plain { height: 60px; }

/* taskbar */
.taskbar { display: flex; align-items: center; flex: none; height: 72px; padding: 0 28px 2px; border-top: 3px solid #a6b8c0; background: #cde3eb; }
.weather { justify-content: flex-start; gap: 14px; width: 400px; font-size: 17px; }
.weather-icon { display: grid; }
.weather-icon > * { grid-area: 1 / 1; }
.badge { z-index: 1; justify-self: end; width: 23px; height: 23px; margin: -6px -6px 0 0; border-radius: 50%; background: #c42b1c; color: #fff; font-size: 14px; line-height: 23px; text-align: center; }
.weather-text { display: flex; flex-direction: column; margin-bottom: 2px; text-align: left; line-height: 24px; }
.weather-text small { font-size: 17px; color: #4c5b61; }
.pinned { display: flex; align-items: center; }
.app { flex-direction: column; width: 66px; height: 60px; }
.app svg { margin: auto; }
.run { padding-top: 4px; }
.run::after { content: ""; width: 9px; height: 5px; margin-bottom: 2px; border-radius: 3px; background: #7a868c; }
.run.focused { width: 56px; margin: 0 5px; background: #eaf5f9; border-radius: 6px; }
.run.focused::after { width: 24px; background: #0078d4; }
.task-search { display: flex; align-items: center; gap: 14px; width: 328px; height: 47px; margin: 0 4px 0 5px; padding-left: 16px; border: 1px solid #b0cbd5; border-radius: 24px; background: #eef6fa; }
.task-search input { flex: 1; min-width: 0; padding: 0; border: 0; outline: 0; background: none; font-size: 19px; }
.task-search input::placeholder { color: #4a4a4a; opacity: 1; }
.tray { display: flex; align-items: center; margin-left: auto; }
.network { gap: 11px; margin: 0 26px; }
.clock { flex-direction: column; align-items: flex-end; margin-bottom: 2px; font-size: 17px; line-height: 24px; }
.alerts { width: 28px; height: 24px; margin-left: 10px; padding: 0; border: 0; border-radius: 12px; background: #0078d4; color: #fff; font-size: 14px; }
```
